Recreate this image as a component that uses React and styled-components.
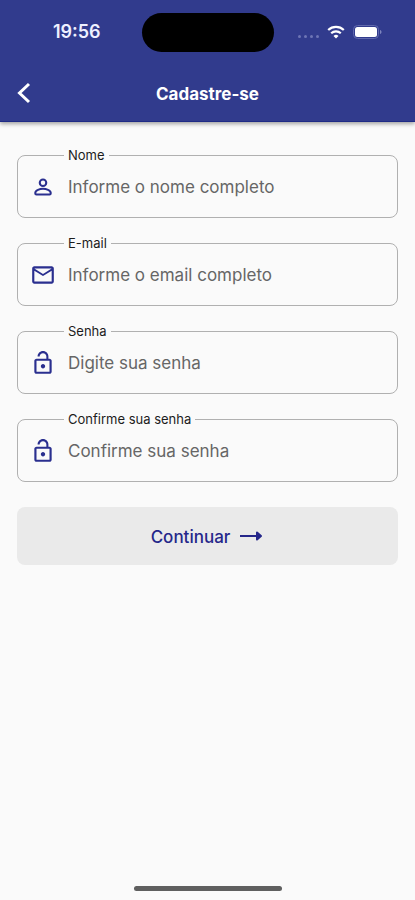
import React, { useState } from 'react'
import styled, { createGlobalStyle } from 'styled-components'
import { MdLockOpen, MdMailOutline } from 'react-icons/md'

const GlobalStyle = createGlobalStyle`
    *, *::before, *::after {
        box-sizing: border-box;
    }

    body {
        margin: 0;
        background: #fafafa;
        font-family: Inter, sans-serif;
    }
`

const Screen = styled.div`
    display: flex;
    flex-direction: column;
    min-height: 100vh;
`

const Header = styled.header`
    background: #313b8d;
    color: #ffffff;
    border-bottom: 1px solid #1f2b86;
    box-shadow: 0 2px 4px rgba(0, 0, 0, 0.35);
`

const StatusBar = styled.div`
    display: grid;
    grid-template-columns: 1fr 132px 1fr;
    align-items: center;
    height: 64px;
`

const Time = styled.time`
    padding-left: 12px;
    font-size: 18px;
    font-weight: 600;
    line-height: 22px;
    text-align: center;
    color: #eef0ff;
`

const Island = styled.div`
    height: 39px;
    border-radius: 20px;
    background: #000000;
`

const Indicators = styled.div`
    display: flex;
    align-items: center;
    gap: 8px;
    padding-left: 24px;
`

const Signal = styled.div`
    display: flex;
    gap: 3px;
    padding-top: 9px;
`

const Dot = styled.span`
    width: 3px;
    height: 3px;
    border-radius: 50%;
    background: #6d75b5;
`

const TitleBar = styled.div`
    display: grid;
    grid-template-columns: 48px 1fr 48px;
    align-items: center;
    height: 57px;
`

const BackButton = styled.button`
    display: flex;
    padding: 12px;
    border: 0;
    background: none;
    color: inherit;
    cursor: pointer;
`

const Title = styled.h1`
    margin: 0;
    padding-top: 2px;
    font-size: 17px;
    font-weight: 700;
    line-height: 24px;
    text-align: center;
`

const Form = styled.form`
    display: flex;
    flex: 1;
    flex-direction: column;
    gap: 18px;
    padding: 26px 17px;
`

const FieldBox = styled.fieldset`
    min-width: 0;
    margin: 0;
    padding: 0 16px 6px 12px;
    border: 1px solid #b0b0b0;
    border-radius: 8px;
`

const Legend = styled.legend`
    margin-left: 34px;
    padding: 0 4px;
    font-size: 13px;
    line-height: 14px;
    color: #1c1c1c;
`

const Row = styled.div`
    display: flex;
    align-items: center;
    gap: 12px;
    height: 49px;
    color: #2a2f8f;

    svg {
        flex: none;
    }
`

const Input = styled.input`
    flex: 1;
    min-width: 0;
    height: 49px;
    padding: 0;
    border: 0;
    outline: none;
    background: none;
    font-family: inherit;
    font-size: 17px;
    color: #1c1c1c;

    &::placeholder {
        color: #666666;
        opacity: 1;
    }
`

const Submit = styled.button`
    display: flex;
    align-items: center;
    justify-content: center;
    gap: 10px;
    height: 58px;
    margin-top: 7px;
    padding: 2px 0 0;
    border: 0;
    border-radius: 8px;
    background: #eaeaea;
    color: #25278a;
    font-family: inherit;
    font-size: 17px;
    font-weight: 500;
    cursor: pointer;
`

const HomeIndicator = styled.div`
    align-self: center;
    width: 148px;
    height: 5px;
    margin-bottom: 9px;
    border-radius: 3px;
    background: #5f5f5f;
`

const PersonIcon = ({ size }) => (
    <svg width={size} height={size} viewBox="0 0 24 24" fill="none" stroke="currentColor" strokeWidth="1.9">
        <circle cx="12" cy="8" r="3" />
        <path d="M4.900 17.200c0-2.200 4.200-3.500 7.100-3.500s7.100 1.300 7.100 3.500v.8a1 1 0 0 1-1 1H5.900a1 1 0 0 1-1-1z" />
    </svg>
)

const BackIcon = () => (
    <svg width="24" height="24" viewBox="0 0 24 24" fill="none" stroke="currentColor" strokeWidth="3">
        <path d="M17 3 7.500 12 17 21" />
    </svg>
)

const ArrowIcon = () => (
    <svg width="24" height="24" viewBox="0 0 24 24" fill="none" stroke="currentColor" strokeWidth="2" strokeLinejoin="round">
        <path d="M0 11h18" />
        <path d="M17 7.500 21 11l-4 3.500z" fill="currentColor" />
    </svg>
)

const WifiIcon = () => (
    <svg width="18" height="14" viewBox="0 0 18 14" fill="none" stroke="#ffffff" strokeWidth="2.200">
        <path d="M1.200 5a11.200 11.200 0 0 1 15.600 0" />
        <path d="M4.200 8.200a7 7 0 0 1 9.600 0" />
        <path d="M9 13.600 6.500 11a3.600 3.600 0 0 1 5 0z" fill="#ffffff" stroke="none" />
    </svg>
)

const BatteryIcon = () => (
    <svg width="29" height="14" viewBox="0 0 29 14">
        <rect x="0.500" y="0.500" width="25" height="13" rx="4" fill="none" stroke="#6169ad" />
        <rect x="2" y="2" width="22" height="10" rx="2.500" fill="#ffffff" />
        <path d="M27 5v4c1-.4 1.500-1.100 1.500-2S28 5.400 27 5z" fill="#7d84bd" />
    </svg>
)

const fields = [
    { id: 'name', label: 'Nome', placeholder: 'Informe o nome completo', type: 'text', Icon: PersonIcon },
    { id: 'email', label: 'E-mail', placeholder: 'Informe o email completo', type: 'email', Icon: MdMailOutline },
    { id: 'password', label: 'Senha', placeholder: 'Digite sua senha', type: 'password', Icon: MdLockOpen },
    { id: 'confirm', label: 'Confirme sua senha', placeholder: 'Confirme sua senha', type: 'password', Icon: MdLockOpen },
]

const Field = ({ id, label, placeholder, type, Icon, value, onChange }) => (
    <FieldBox>
        <Legend>
            <label htmlFor={id}>{label}</label>
        </Legend>
        <Row>
            <Icon size={26} />
            <Input id={id} name={id} type={type} placeholder={placeholder} value={value} onChange={onChange} />
        </Row>
    </FieldBox>
)

const App = () => {
    const [values, setValues] = useState({})

    const onChange = ({ target }) => setValues({ ...values, [target.name]: target.value })

    return (
        <Screen>
            <GlobalStyle />
            <Header>
                <StatusBar>
                    <Time>19:56</Time>
                    <Island />
                    <Indicators>
                        <Signal>
                            {[0, 1, 2, 3].map(dot => <Dot key={dot} />)}
                        </Signal>
                        <WifiIcon />
                        <BatteryIcon />
                    </Indicators>
                </StatusBar>
                <TitleBar>
                    <BackButton type="button" aria-label="Voltar">
                        <BackIcon />
                    </BackButton>
                    <Title>Cadastre-se</Title>
                </TitleBar>
            </Header>
            <Form onSubmit={event => event.preventDefault()}>
                {fields.map(field => (
                    <Field key={field.id} {...field} value={values[field.id] || ''} onChange={onChange} />
                ))}
                <Submit type="submit">
                    Continuar
                    <ArrowIcon />
                </Submit>
            </Form>
            <HomeIndicator />
        </Screen>
    )
}

export default App
